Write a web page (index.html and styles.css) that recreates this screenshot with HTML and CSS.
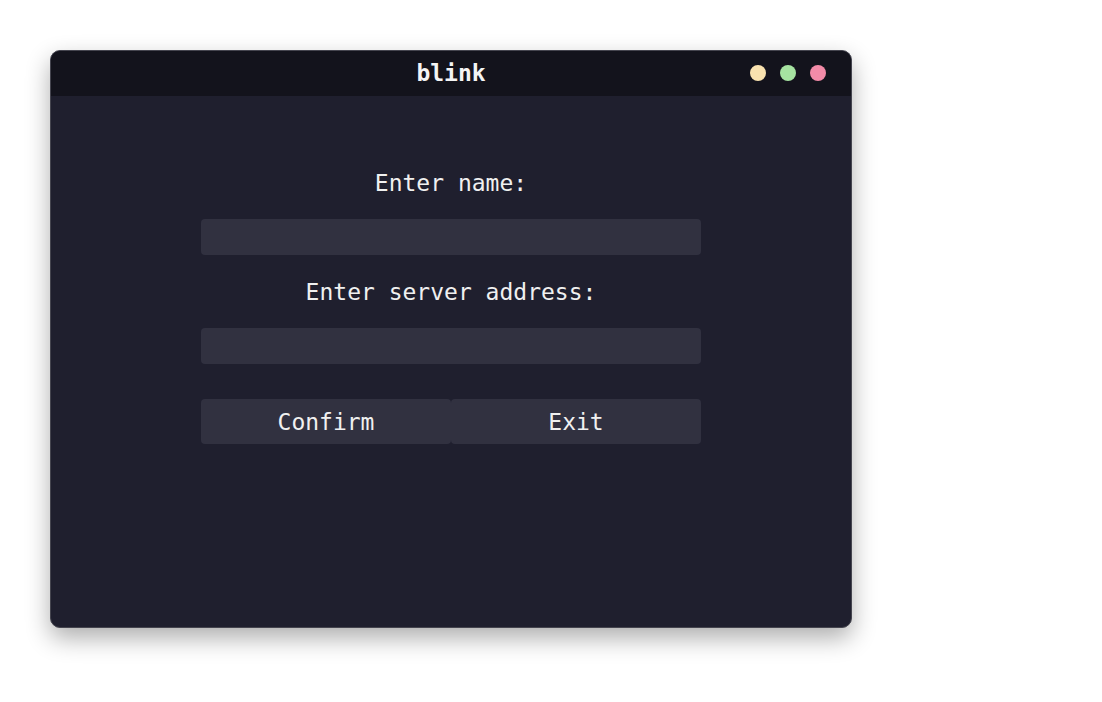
FILE: index.html
```html
<!DOCTYPE html>
<html>
<head>
<meta charset="utf-8">
<link rel="stylesheet" href="styles.css">
</head>
<body>
<div class="window">
  <div class="titlebar">
    <span class="title">blink</span>
    <div class="dots">
      <span class="dot yellow"></span>
      <span class="dot green"></span>
      <span class="dot red"></span>
    </div>
  </div>
  <div class="content">
    <div class="form">
      <label class="label">Enter name:</label>
      <div class="input"></div>
      <label class="label">Enter server address:</label>
      <div class="input"></div>
      <div class="buttons">
        <button class="btn">Confirm</button>
        <button class="btn">Exit</button>
      </div>
    </div>
  </div>
</div>
</body>
</html>
```
FILE: styles.css
```css
html, body {
  margin: 0;
  padding: 0;
  background: #ffffff;
}
body {
  padding: 50px 0 0 50px;
  min-height: 100vh;
  box-sizing: border-box;
  font-family: "DejaVu Sans Mono", "Liberation Mono", monospace;
}
.window {
  width: 800px;
  height: 576px;
  border: 1px solid #45454f;
  border-radius: 10px;
  background: #1f1f2e;
  overflow: hidden;
  box-shadow: 0 10px 24px rgba(0, 0, 0, 0.32);
  display: flex;
  flex-direction: column;
}
.titlebar {
  height: 45px;
  background: #13131c;
  position: relative;
  display: flex;
  align-items: center;
  justify-content: center;
}
.title {
  color: #f4f4f4;
  font-weight: bold;
  font-size: 23px;
  line-height: 45px;
}
.dots {
  position: absolute;
  right: 25px;
  top: 14px;
  display: flex;
  gap: 14px;
}
.dot {
  width: 16px;
  height: 16px;
  border-radius: 50%;
}
.yellow { background: #f9e2af; }
.green { background: #a6e3a1; }
.red { background: #f38ba8; }
.content {
  flex: 1;
  display: flex;
  justify-content: center;
  padding-top: 72px;
}
.form {
  width: 500px;
  display: flex;
  flex-direction: column;
  align-items: stretch;
}
.label {
  color: #f0f0f0;
  font-size: 23px;
  line-height: 30px;
  text-align: center;
  margin-bottom: 21px;
}
.input {
  height: 36px;
  background: #313140;
  border-radius: 4px;
  margin-bottom: 22px;
}
.buttons {
  display: flex;
  margin-top: 13px;
}
.btn {
  flex: 1;
  height: 45px;
  border: none;
  border-radius: 4px;
  background: #313140;
  color: #f0f0f0;
  font-family: "DejaVu Sans Mono", "Liberation Mono", monospace;
  font-size: 23px;
  padding: 0;
}
```
